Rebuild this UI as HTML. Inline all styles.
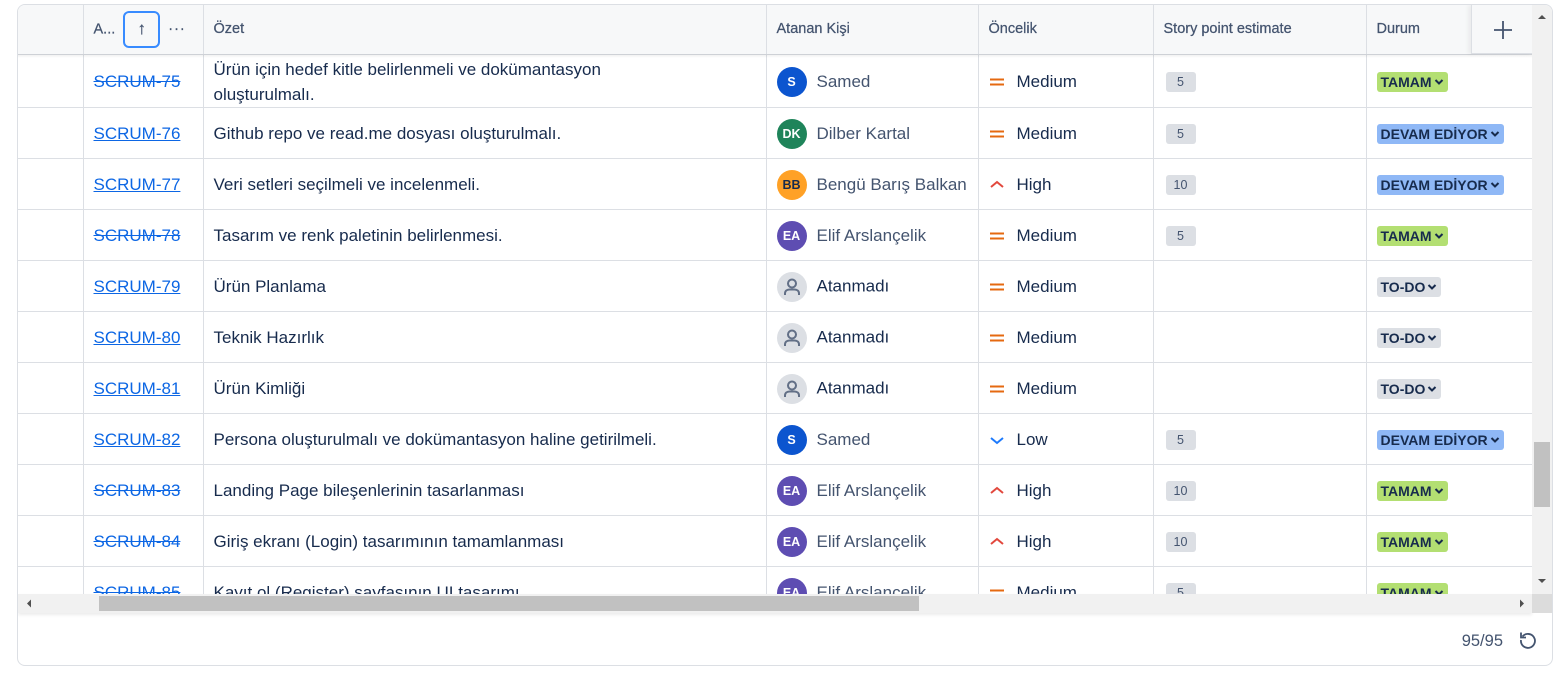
<!DOCTYPE html>
<html><head><meta charset="utf-8"><style>
*{box-sizing:border-box;margin:0;padding:0}
body{width:1565px;height:676px;background:#fff;font-family:"Liberation Sans",sans-serif;position:relative;overflow:hidden;color:#172b4d}
.frame{position:absolute;left:17px;top:4px;width:1536px;height:662px;border:1px solid #dcdfe4;border-radius:8px;overflow:hidden}
.clip{position:absolute;left:0;top:0;width:1514px;height:589px;overflow:hidden}
table{border-collapse:collapse;table-layout:fixed;width:1515px;position:absolute;left:0;top:0}
th{height:49px;background:#f7f8f9;text-align:left;font-size:14.5px;font-weight:normal;color:#44546f;padding-left:10px;border-right:1px solid #dcdfe4;border-bottom:1px solid #dcdfe4;-webkit-text-stroke:0.25px #44546f}
td{height:51px;border-right:1px solid #dcdfe4;border-bottom:1px solid #dcdfe4;font-size:17px;padding-left:10px;vertical-align:middle;white-space:nowrap;padding-top:2px}
tr.f td{height:53px}
td.k a{color:#0c66e4;text-decoration:underline}
td.k a.s{text-decoration:line-through}
.av{display:inline-block;width:30px;height:30px;border-radius:50%;vertical-align:middle;margin-right:10px;color:#fff;font-size:12.5px;font-weight:bold;text-align:center;line-height:30px}
.nm{color:#44546f;vertical-align:middle}
.pi{display:inline-block;width:16px;height:16px;vertical-align:middle;margin-right:12px}
.pt{display:inline-block;background:#dcdfe4;border-radius:3px;font-size:12.5px;width:30px;height:20px;line-height:20px;text-align:center;color:#44546f;margin-left:2px}
.lz{display:inline-block;border-radius:3px;font-size:14px;font-weight:bold;height:20px;line-height:20px;padding:0 4px;color:#172b4d;margin-left:0}
.lz svg{vertical-align:middle;margin-left:2px;margin-top:-2px}
.g{background:#b3df72}.b{background:#8fb8f6}.n{background:#dcdfe4}
</style></head><body>
<div class="frame">
<div class="clip">
<table>
<colgroup><col style="width:65px"><col style="width:120px"><col style="width:563px"><col style="width:212px"><col style="width:175px"><col style="width:213px"><col style="width:167px"></colgroup>
<tr><th></th><th><span>A...</span><span style="display:inline-block;width:37px;height:37px;border:2px solid #388bff;border-radius:6px;vertical-align:middle;margin-left:8px;text-align:center;line-height:31px;font-size:17px;color:#44546f">↑</span><span style="margin-left:8px;letter-spacing:1px">···</span></th><th>Özet</th><th>Atanan Kişi</th><th>Öncelik</th><th>Story point estimate</th><th>Durum</th></tr>
<tr class="f"><td></td><td class="k"><a class="s">SCRUM-75</a></td><td style="white-space:normal;line-height:25px">Ürün için hedef kitle belirlenmeli ve dokümantasyon<br>oluşturulmalı.</td><td><span class="av" style="background:#0c55cf">S</span><span class="nm">Samed</span></td><td><svg class="pi" viewBox="0 0 16 16"><path d="M1 5.5h14M1 10.5h14" stroke="#e56910" stroke-width="2"/></svg>Medium</td><td><span class="pt">5</span></td><td><span class="lz g">TAMAM<svg width="10" height="8" viewBox="0 0 10 8"><path d="M1.5 2l3.5 3.5L8.5 2" stroke="#172b4d" stroke-width="2" fill="none"/></svg></span></td></tr>
<tr><td></td><td class="k"><a>SCRUM-76</a></td><td>Github repo ve read.me dosyası oluşturulmalı.</td><td><span class="av" style="background:#1f845a">DK</span><span class="nm">Dilber Kartal</span></td><td><svg class="pi" viewBox="0 0 16 16"><path d="M1 5.5h14M1 10.5h14" stroke="#e56910" stroke-width="2"/></svg>Medium</td><td><span class="pt">5</span></td><td><span class="lz b">DEVAM EDİYOR<svg width="10" height="8" viewBox="0 0 10 8"><path d="M1.5 2l3.5 3.5L8.5 2" stroke="#172b4d" stroke-width="2" fill="none"/></svg></span></td></tr>
<tr><td></td><td class="k"><a>SCRUM-77</a></td><td>Veri setleri seçilmeli ve incelenmeli.</td><td><span class="av" style="background:#ffa126;color:#172b4d">BB</span><span class="nm">Bengü Barış Balkan</span></td><td><svg class="pi" viewBox="0 0 16 16"><path d="M2 10l6-5 6 5" stroke="#e2483d" stroke-width="2" fill="none"/></svg>High</td><td><span class="pt">10</span></td><td><span class="lz b">DEVAM EDİYOR<svg width="10" height="8" viewBox="0 0 10 8"><path d="M1.5 2l3.5 3.5L8.5 2" stroke="#172b4d" stroke-width="2" fill="none"/></svg></span></td></tr>
<tr><td></td><td class="k"><a class="s">SCRUM-78</a></td><td>Tasarım ve renk paletinin belirlenmesi.</td><td><span class="av" style="background:#5e4db2">EA</span><span class="nm">Elif Arslançelik</span></td><td><svg class="pi" viewBox="0 0 16 16"><path d="M1 5.5h14M1 10.5h14" stroke="#e56910" stroke-width="2"/></svg>Medium</td><td><span class="pt">5</span></td><td><span class="lz g">TAMAM<svg width="10" height="8" viewBox="0 0 10 8"><path d="M1.5 2l3.5 3.5L8.5 2" stroke="#172b4d" stroke-width="2" fill="none"/></svg></span></td></tr>
<tr><td></td><td class="k"><a>SCRUM-79</a></td><td>Ürün Planlama</td><td><span class="av" style="background:#dcdfe4"><svg width="30" height="30" viewBox="0 0 30 30"><circle cx="15" cy="11.5" r="4" stroke="#626f86" stroke-width="2" fill="none"/><path d="M8 23v-1.5c0-2.5 2-4 4.5-4h5c2.5 0 4.5 1.5 4.5 4V23" stroke="#626f86" stroke-width="2" fill="none"/></svg></span><span>Atanmadı</span></td><td><svg class="pi" viewBox="0 0 16 16"><path d="M1 5.5h14M1 10.5h14" stroke="#e56910" stroke-width="2"/></svg>Medium</td><td></td><td><span class="lz n">TO-DO<svg width="10" height="8" viewBox="0 0 10 8"><path d="M1.5 2l3.5 3.5L8.5 2" stroke="#172b4d" stroke-width="2" fill="none"/></svg></span></td></tr>
<tr><td></td><td class="k"><a>SCRUM-80</a></td><td>Teknik Hazırlık</td><td><span class="av" style="background:#dcdfe4"><svg width="30" height="30" viewBox="0 0 30 30"><circle cx="15" cy="11.5" r="4" stroke="#626f86" stroke-width="2" fill="none"/><path d="M8 23v-1.5c0-2.5 2-4 4.5-4h5c2.5 0 4.5 1.5 4.5 4V23" stroke="#626f86" stroke-width="2" fill="none"/></svg></span><span>Atanmadı</span></td><td><svg class="pi" viewBox="0 0 16 16"><path d="M1 5.5h14M1 10.5h14" stroke="#e56910" stroke-width="2"/></svg>Medium</td><td></td><td><span class="lz n">TO-DO<svg width="10" height="8" viewBox="0 0 10 8"><path d="M1.5 2l3.5 3.5L8.5 2" stroke="#172b4d" stroke-width="2" fill="none"/></svg></span></td></tr>
<tr><td></td><td class="k"><a>SCRUM-81</a></td><td>Ürün Kimliği</td><td><span class="av" style="background:#dcdfe4"><svg width="30" height="30" viewBox="0 0 30 30"><circle cx="15" cy="11.5" r="4" stroke="#626f86" stroke-width="2" fill="none"/><path d="M8 23v-1.5c0-2.5 2-4 4.5-4h5c2.5 0 4.5 1.5 4.5 4V23" stroke="#626f86" stroke-width="2" fill="none"/></svg></span><span>Atanmadı</span></td><td><svg class="pi" viewBox="0 0 16 16"><path d="M1 5.5h14M1 10.5h14" stroke="#e56910" stroke-width="2"/></svg>Medium</td><td></td><td><span class="lz n">TO-DO<svg width="10" height="8" viewBox="0 0 10 8"><path d="M1.5 2l3.5 3.5L8.5 2" stroke="#172b4d" stroke-width="2" fill="none"/></svg></span></td></tr>
<tr><td></td><td class="k"><a>SCRUM-82</a></td><td>Persona oluşturulmalı ve dokümantasyon haline getirilmeli.</td><td><span class="av" style="background:#0c55cf">S</span><span class="nm">Samed</span></td><td><svg class="pi" viewBox="0 0 16 16"><path d="M2 6l6 5 6-5" stroke="#1d7afc" stroke-width="2" fill="none"/></svg>Low</td><td><span class="pt">5</span></td><td><span class="lz b">DEVAM EDİYOR<svg width="10" height="8" viewBox="0 0 10 8"><path d="M1.5 2l3.5 3.5L8.5 2" stroke="#172b4d" stroke-width="2" fill="none"/></svg></span></td></tr>
<tr><td></td><td class="k"><a class="s">SCRUM-83</a></td><td>Landing Page bileşenlerinin tasarlanması</td><td><span class="av" style="background:#5e4db2">EA</span><span class="nm">Elif Arslançelik</span></td><td><svg class="pi" viewBox="0 0 16 16"><path d="M2 10l6-5 6 5" stroke="#e2483d" stroke-width="2" fill="none"/></svg>High</td><td><span class="pt">10</span></td><td><span class="lz g">TAMAM<svg width="10" height="8" viewBox="0 0 10 8"><path d="M1.5 2l3.5 3.5L8.5 2" stroke="#172b4d" stroke-width="2" fill="none"/></svg></span></td></tr>
<tr><td></td><td class="k"><a class="s">SCRUM-84</a></td><td>Giriş ekranı (Login) tasarımının tamamlanması</td><td><span class="av" style="background:#5e4db2">EA</span><span class="nm">Elif Arslançelik</span></td><td><svg class="pi" viewBox="0 0 16 16"><path d="M2 10l6-5 6 5" stroke="#e2483d" stroke-width="2" fill="none"/></svg>High</td><td><span class="pt">10</span></td><td><span class="lz g">TAMAM<svg width="10" height="8" viewBox="0 0 10 8"><path d="M1.5 2l3.5 3.5L8.5 2" stroke="#172b4d" stroke-width="2" fill="none"/></svg></span></td></tr>
<tr><td></td><td class="k"><a class="s">SCRUM-85</a></td><td>Kayıt ol (Register) sayfasının UI tasarımı</td><td><span class="av" style="background:#5e4db2">EA</span><span class="nm">Elif Arslançelik</span></td><td><svg class="pi" viewBox="0 0 16 16"><path d="M1 5.5h14M1 10.5h14" stroke="#e56910" stroke-width="2"/></svg>Medium</td><td><span class="pt">5</span></td><td><span class="lz g">TAMAM<svg width="10" height="8" viewBox="0 0 10 8"><path d="M1.5 2l3.5 3.5L8.5 2" stroke="#172b4d" stroke-width="2" fill="none"/></svg></span></td></tr>
</table>
<div style="position:absolute;left:0;top:49px;width:1514px;height:4px;background:linear-gradient(rgba(0,0,0,.07),rgba(0,0,0,0))"></div>
<div style="position:absolute;left:1453px;top:0;width:61px;height:49px;background:#f7f8f9;border-left:1px solid #dcdfe4;border-bottom:1px solid #dcdfe4;box-shadow:-3px 0 4px rgba(0,0,0,.05)"><svg width="20" height="20" viewBox="0 0 20 20" style="position:absolute;left:21px;top:15px"><path d="M10 1v18M1 10h18" stroke="#44546f" stroke-width="1.8"/></svg></div>
</div>
<div style="position:absolute;left:1514px;top:0;width:20px;height:589px;background:#f1f1f1">
<svg width="20" height="14" style="position:absolute;top:5px"><path d="M6 9l4-4 4 4z" fill="#505050"/></svg>
<div style="position:absolute;left:2px;top:437px;width:16px;height:65px;background:#c1c1c1"></div>
<svg width="20" height="14" style="position:absolute;top:569px"><path d="M6 5l4 4 4-4z" fill="#505050"/></svg>
</div>
<div style="position:absolute;left:0;top:589px;width:1514px;height:19px;background:#f1f1f1;box-shadow:0 2px 3px rgba(0,0,0,.08)">
<svg width="14" height="19" style="position:absolute;left:4px"><path d="M9 5.5l-4 4 4 4z" fill="#505050"/></svg>
<div style="position:absolute;left:81px;top:2px;width:820px;height:15px;background:#c1c1c1"></div>
<svg width="14" height="19" style="position:absolute;left:1497px"><path d="M5 5.5l4 4-4 4z" fill="#505050"/></svg>
</div>
<div style="position:absolute;left:1514px;top:589px;width:20px;height:19px;background:#dcdcdc"></div>
<div style="position:absolute;right:49px;top:627px;font-size:16.5px;color:#44546f">95/95</div>
<svg width="20" height="20" viewBox="0 0 20 20" style="position:absolute;right:14px;top:625px"><path d="M4.5 6.5A7 7 0 1 1 3 10" stroke="#44546f" stroke-width="1.8" fill="none"/><path d="M3 2.5v5h5" stroke="#44546f" stroke-width="1.8" fill="none"/></svg>
</div>
</body></html>
